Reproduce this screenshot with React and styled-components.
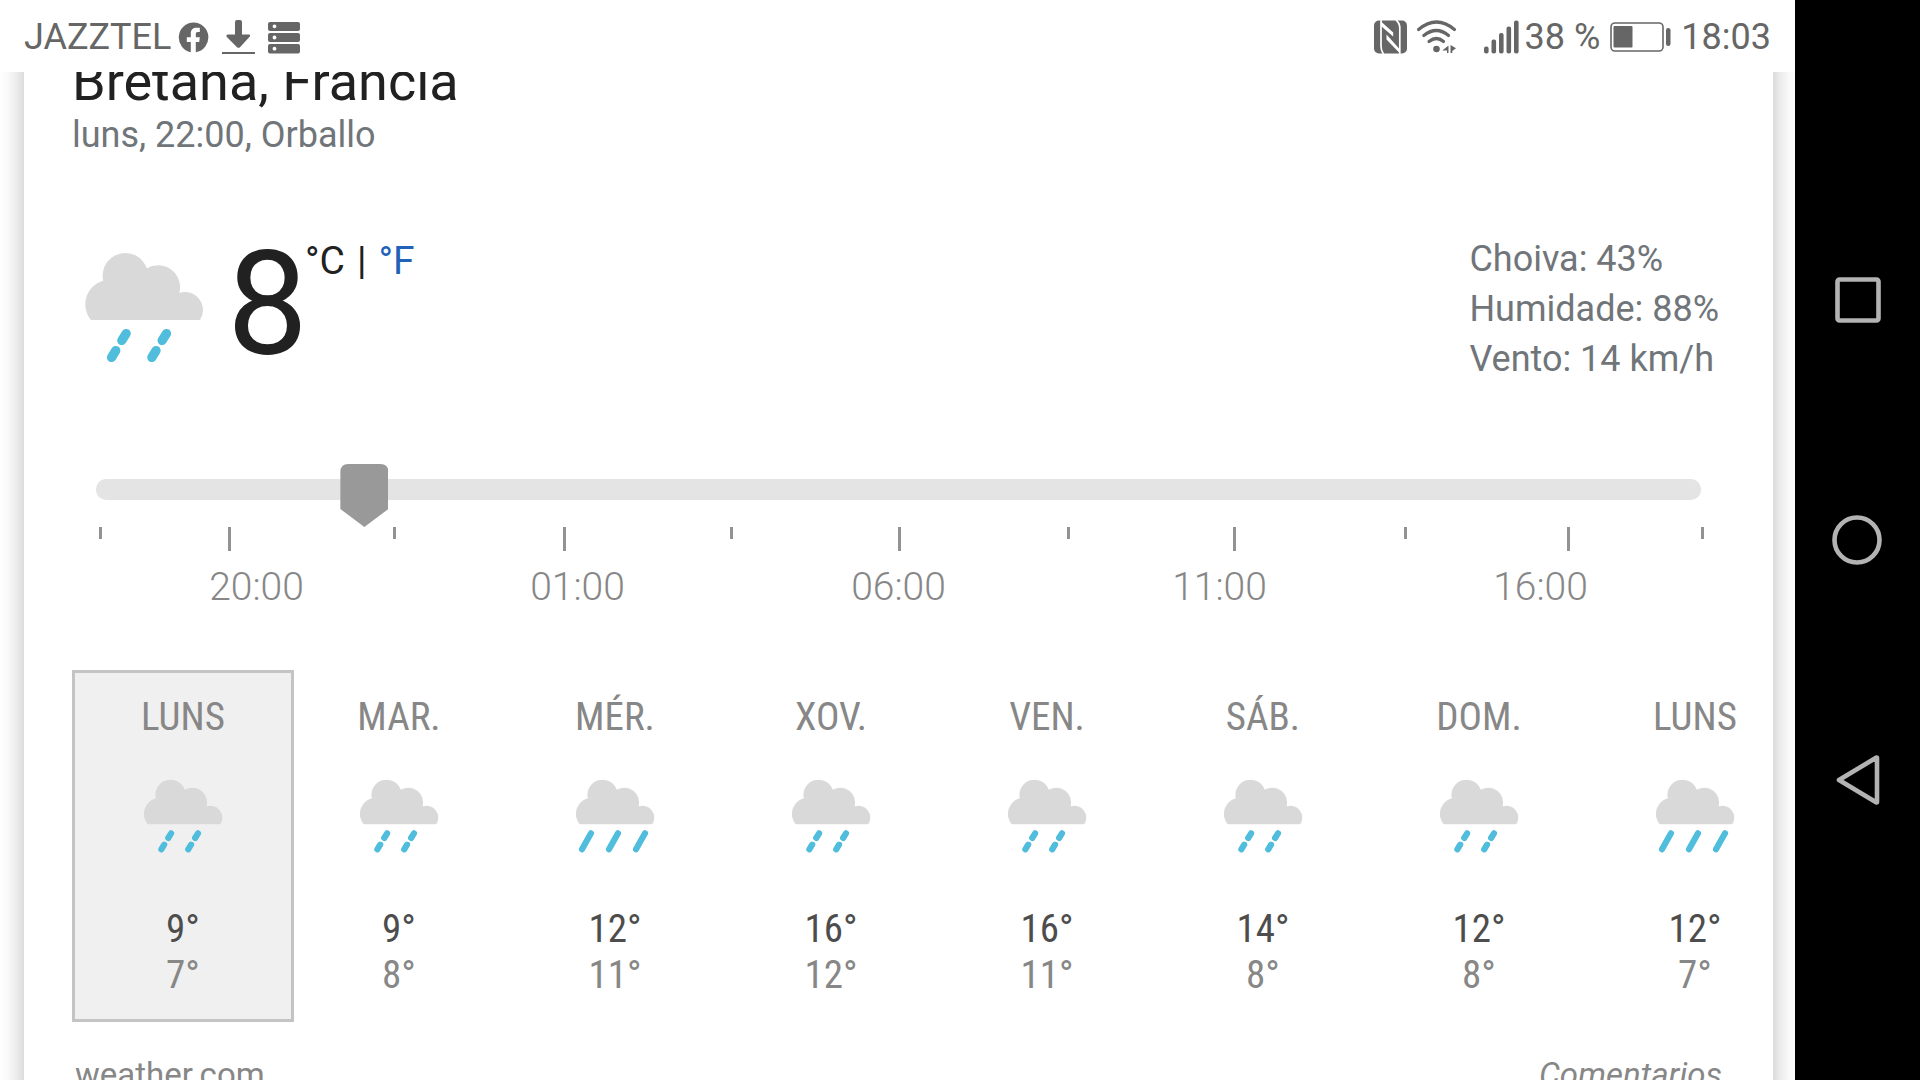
import React, { useState } from "react";
import styled, { createGlobalStyle, css } from "styled-components";

const GlobalStyle = createGlobalStyle`
  * { box-sizing: border-box; }
  body {
    margin: 0;
    background: #fff;
    font-family: Roboto, "Liberation Sans", sans-serif;
  }
  button {
    appearance: none;
    border: 0;
    margin: 0;
    padding: 0;
    background: none;
    color: inherit;
    font: inherit;
    cursor: pointer;
  }
`;

const Device = styled.div`
  display: flex;
  height: 100vh;
  overflow: hidden;
`;

const Screen = styled.div`
  flex: 1;
  min-width: 0;
  display: flex;
  flex-direction: column;
  background: #fff;
`;

const StatusBar = styled.header`
  flex: none;
  display: flex;
  justify-content: space-between;
  align-items: center;
  height: 72px;
  padding: 2px 24px 0;
  background: #fff;
  color: #666;
  font-size: 36px;
  line-height: 42px;
`;

const StatusGroup = styled.div`
  display: flex;
  align-items: center;
  gap: ${(p) => p.$gap}px;
`;

const Glyph = styled.svg`
  display: block;
  flex: none;
  fill: currentColor;
`;

const Viewport = styled.main`
  flex: 1;
  min-height: 0;
  overflow: hidden;
  padding: 0 22px 0 24px;
`;

const Card = styled.article`
  margin-top: -45px;
  padding: 24px 0;
  background: #fff;
  box-shadow: 0 0 24px rgba(0, 0, 0, 0.28);
  overflow: hidden;
`;

const Place = styled.h1`
  margin: 0;
  padding: 0 48px;
  color: #212121;
  font-size: 54px;
  font-weight: 400;
  line-height: 62px;
`;

const Moment = styled.p`
  margin: 0;
  padding: 0 48px;
  color: #70757a;
  font-size: 36px;
  line-height: 44px;
`;

const Current = styled.section`
  display: flex;
  align-items: flex-start;
  margin-top: 77px;
  padding: 0 54px 0 48px;
`;

const WeatherSvg = styled.svg`
  display: block;
  flex: none;
  width: ${(p) => p.$size}px;
  height: ${(p) => p.$size}px;
`;

const Degrees = styled.span`
  width: 78px;
  margin-left: 11px;
  color: #212121;
  font-size: 144px;
  line-height: 142px;
`;

const Units = styled.div`
  display: flex;
  gap: 12px;
  color: #212121;
  font-size: 39px;
  line-height: 54px;
`;

const Unit = styled.button`
  color: ${(p) => (p.$active ? "#212121" : "#1f62b8")};
`;

const Details = styled.div`
  margin-left: auto;
  color: #70757a;
  font-size: 36px;
  line-height: 50px;
`;

const Hours = styled.section`
  margin-top: 80px;
  padding: 0 72px;
`;

const thumb = css`
  width: 48px;
  height: 63px;
  border: 0;
  border-radius: 0;
  background: #999;
  clip-path: path("M8 0H40Q48 0 48 8V45L24 63L0 45V8Q0 0 8 0Z");
`;

const HourSlider = styled.input`
  appearance: none;
  display: block;
  width: 100%;
  height: 51px;
  margin: 0 0 12px;
  background: none;

  &::-webkit-slider-runnable-track {
    height: 21px;
    border-radius: 10px;
    background: #e4e4e4;
  }
  &::-webkit-slider-thumb {
    appearance: none;
    margin-top: -15px;
    ${thumb}
  }
  &::-moz-range-track {
    height: 21px;
    border-radius: 10px;
    background: #e4e4e4;
  }
  &::-moz-range-thumb {
    ${thumb}
  }
`;

const Ticks = styled.div`
  display: grid;
  grid-template-columns: ${(p) => p.$spans.map((s) => `${s}fr`).join(" ")} 0;
  height: 24px;
  padding-left: 3px;
`;

const Tick = styled.span`
  width: 3px;
  height: ${(p) => (p.$major ? 24 : 12)}px;
  background: #929292;
`;

const HourLabels = styled.div`
  display: grid;
  grid-template-columns: repeat(5, 1fr);
  margin-top: 13px;
  color: #878787;
  font-size: 39px;
  font-weight: 300;
  line-height: 46px;
  text-align: center;
`;

const Days = styled.section`
  display: flex;
  margin-top: 60px;
  padding-left: 48px;
  overflow: hidden;
`;

const Day = styled.button`
  flex: none;
  display: flex;
  flex-direction: column;
  align-items: center;
  width: 222px;
  margin-right: -6px;
  padding: 21px 0;
  border: 3px solid ${(p) => (p.$selected ? "#c4c4c4" : "transparent")};
  background: ${(p) => (p.$selected ? "#f0f0f0" : "transparent")};
  color: #878787;
  font-family: "Roboto Condensed", Roboto, "Liberation Sans", sans-serif;
  font-size: 39px;
  line-height: 46px;
`;

const DayIcon = styled.span`
  margin: 27px 0 43px;
`;

const High = styled.span`
  color: #4d4d4d;
`;

const Footer = styled.footer`
  display: flex;
  justify-content: space-between;
  margin-top: 34px;
  padding: 0 51px;
  font-size: 33px;
  line-height: 38px;
`;

const FooterLink = styled.a`
  color: #878787;
  text-decoration: none;
  font-style: ${(p) => (p.$italic ? "italic" : "normal")};
`;

const NavBar = styled.nav`
  flex: none;
  display: flex;
  flex-direction: column;
  justify-content: center;
  align-items: center;
  gap: 180px;
  width: 125px;
  background: #000;
`;

const NavButton = styled.button`
  width: 60px;
  height: 60px;

  svg {
    display: block;
    fill: none;
    stroke: #b3b3b3;
    stroke-width: 4.6;
    stroke-linejoin: round;
  }
`;

const CLOUD =
  "M19 86A24.5 24.5 0 0 1 31.2 46.7A22.7 22.7 0 0 1 74.8 34.3A22 22 0 0 1 107.3 59A18 18 0 0 1 128 86Z";
const DRIZZLE =
  "M54.2 99.5L49.8 106.5M43.8 116.5L39.5 123.5M94.5 99.5L90.1 106.5M84.1 116.5L79.8 123.5";
const RAIN = "M36 99.5L22.5 123.5M76.500 99.5L63 123.5M117 99.5L103.5 123.5";

function WeatherIcon({ kind, size }) {
  return (
    <WeatherSvg $size={size} viewBox="0 0 144 144" aria-hidden="true">
      <path d={CLOUD} fill="#d9d9d9" />
      <path
        d={kind === "rain" ? RAIN : DRIZZLE}
        fill="none"
        stroke="#4fbddb"
        strokeWidth="9.2"
        strokeLinecap="round"
      />
    </WeatherSvg>
  );
}

const FacebookIcon = () => (
  <Glyph width="31" height="31" viewBox="0 0 31 31">
    <path d="M15.5 0.5A15 15 0 0 0 12.8 30.2V20H8.8V15.3H12.8V11.6C12.8 7.6 15 5.7 18.5 5.7H21.8V10H20C18.3 10 17.8 10.8 17.8 12V15.3H21.8L21.2 20H17.8V30.3A15 15 0 0 0 15.5 0.5Z" />
  </Glyph>
);

const DownloadIcon = () => (
  <Glyph width="33" height="34" viewBox="0 0 33 34">
    <path d="M15 0h3q2 0 2 2v12.500h7q2 .5 .6 2.300L18 27.300q-1.500 1-3 0L4.600 16.800q-1-1.800 1-2.300H13V2q0-2 2-2zM0 32h33v2H0z" />
  </Glyph>
);

const StorageIcon = () => (
  <Glyph width="32" height="33" viewBox="0 0 32 33">
    <path
      fillRule="evenodd"
      d="M2 1h28q2 0 2 2v5q0 2-2 2H2Q0 10 0 8V3Q0 1 2 1zM6.500 3.500a1.900 1.900 0 1 0 .01 0zM2 12h28q2 0 2 2v5q0 2-2 2H2Q0 21 0 19V14Q0 12 2 12zM6.500 14.600a1.900 1.900 0 1 0 .01 0zM2 23h28q2 0 2 2v5.500q0 2-2 2H2Q0 32.500 0 30.500V25Q0 23 2 23zM6.500 25.800a1.900 1.900 0 1 0 .01 0z"
    />
  </Glyph>
);

const NfcIcon = () => (
  <Glyph width="33" height="34" viewBox="0 0 33 34">
    <rect x="0" y="0.5" width="33" height="33" rx="5" />
    <path
      d="M7 0V26Q7 31 9.500 34M22 0Q25.800 3 25.800 8V34"
      fill="none"
      stroke="#fff"
      strokeWidth="1.700"
    />
    <path d="M7 1.500L19.200 12.500V16.500L7 6zM12.500 14.500L25.500 29V33L12.500 19.500z" fill="#fff" />
  </Glyph>
);

const WifiIcon = () => (
  <Glyph width="39" height="34" viewBox="0 0 39 34">
    <g fill="none" stroke="currentColor" strokeWidth="3.200" strokeLinecap="round">
      <path d="M1.600 9.500Q19.500 -5.500 37.400 9.500" />
      <path d="M6.800 15.500Q19.500 5.500 31.500 15.500" />
      <path d="M12 21.500Q19.500 15.500 26.500 21.500" />
    </g>
    <circle cx="19.500" cy="29" r="3.300" />
    <path d="M31.500 25.500V33H30V30.500H25.300zM33.500 25L39 28.300L35.300 31V33H33.500z" />
  </Glyph>
);

const SignalIcon = () => (
  <Glyph width="35" height="34" viewBox="0 0 35 34">
    <rect x="0" y="26.500" width="4.600" height="7" rx="2" />
    <rect x="7.500" y="19.500" width="4.600" height="14" rx="2" />
    <rect x="15" y="13" width="4.600" height="20.500" rx="2" />
    <rect x="22.500" y="6.500" width="4.600" height="27" rx="2" />
    <rect x="30" y="0.500" width="4.600" height="33" rx="2" />
  </Glyph>
);

const BatteryIcon = () => (
  <Glyph width="61" height="30" viewBox="0 0 61 30">
    <rect x="1" y="1" width="52" height="28" rx="4" fill="none" stroke="currentColor" strokeWidth="1.600" />
    <rect x="3.500" y="4" width="19" height="21.500" rx="1" />
    <rect x="56" y="6" width="4.500" height="18" rx="2.200" />
  </Glyph>
);

const TICKS = [
  { span: 129 },
  { span: 165, major: true },
  { span: 170 },
  { span: 167, major: true },
  { span: 168 },
  { span: 169, major: true },
  { span: 166 },
  { span: 171, major: true },
  { span: 163 },
  { span: 134, major: true },
  { span: 0 },
];
const TICK_SPANS = TICKS.slice(0, -1).map((t) => t.span);

const HOURS = ["20:00", "01:00", "06:00", "11:00", "16:00"];

const DAYS = [
  { name: "LUNS", kind: "drizzle", high: 9, low: 7 },
  { name: "MAR.", kind: "drizzle", high: 9, low: 8 },
  { name: "MÉR.", kind: "rain", high: 12, low: 11 },
  { name: "XOV.", kind: "drizzle", high: 16, low: 12 },
  { name: "VEN.", kind: "drizzle", high: 16, low: 11 },
  { name: "SÁB.", kind: "drizzle", high: 14, low: 8 },
  { name: "DOM.", kind: "drizzle", high: 12, low: 8 },
  { name: "LUNS", kind: "rain", high: 12, low: 7 },
];

export default function App() {
  const [minute, setMinute] = useState(226);
  const [day, setDay] = useState(0);

  return (
    <>
      <GlobalStyle />
      <Device>
        <Screen>
          <StatusBar>
            <StatusGroup $gap={13}>
              <StatusGroup $gap={7}>
                <span>JAZZTEL</span>
                <FacebookIcon />
              </StatusGroup>
              <DownloadIcon />
              <StorageIcon />
            </StatusGroup>
            <StatusGroup $gap={10}>
              <NfcIcon />
              <StatusGroup $gap={28}>
                <WifiIcon />
                <StatusGroup $gap={6}>
                  <SignalIcon />
                  <span>38 %</span>
                </StatusGroup>
              </StatusGroup>
              <BatteryIcon />
              <time>18:03</time>
            </StatusGroup>
          </StatusBar>
          <Viewport>
            <Card>
              <Place>Bretaña, Francia</Place>
              <Moment>luns, 22:00, Orballo</Moment>
              <Current>
                <WeatherIcon kind="drizzle" size={144} />
                <Degrees>8</Degrees>
                <Units>
                  <Unit $active>°C</Unit>
                  <span>|</span>
                  <Unit>°F</Unit>
                </Units>
                <Details>
                  <div>Choiva: 43%</div>
                  <div>Humidade: 88%</div>
                  <div>Vento: 14 km/h</div>
                </Details>
              </Current>
              <Hours>
                <HourSlider
                  type="range"
                  aria-label="Hora"
                  min={0}
                  max={1440}
                  value={minute}
                  onChange={(e) => setMinute(Number(e.target.value))}
                />
                <Ticks $spans={TICK_SPANS}>
                  {TICKS.map((t, i) => (
                    <Tick key={i} $major={t.major} />
                  ))}
                </Ticks>
                <HourLabels>
                  {HOURS.map((h) => (
                    <span key={h}>{h}</span>
                  ))}
                </HourLabels>
              </Hours>
              <Days>
                {DAYS.map((d, i) => (
                  <Day key={i} $selected={i === day} onClick={() => setDay(i)}>
                    <span>{d.name}</span>
                    <DayIcon>
                      <WeatherIcon kind={d.kind} size={96} />
                    </DayIcon>
                    <High>{d.high}°</High>
                    <span>{d.low}°</span>
                  </Day>
                ))}
              </Days>
              <Footer>
                <FooterLink href="#weather">weather.com</FooterLink>
                <FooterLink href="#comentarios" $italic>
                  Comentarios
                </FooterLink>
              </Footer>
            </Card>
          </Viewport>
        </Screen>
        <NavBar>
          <NavButton aria-label="Recentes">
            <svg width="60" height="60" viewBox="0 0 60 60">
              <rect x="9.500" y="9.500" width="41" height="41" rx="2" />
            </svg>
          </NavButton>
          <NavButton aria-label="Inicio">
            <svg width="60" height="60" viewBox="0 0 60 60">
              <circle cx="29" cy="30" r="22.500" />
            </svg>
          </NavButton>
          <NavButton aria-label="Atrás">
            <svg width="60" height="60" viewBox="0 0 60 60">
              <path d="M11 30L48.500 7.500Q49 7.500 49 8V52Q49 52.500 48.500 52.500Z" />
            </svg>
          </NavButton>
        </NavBar>
      </Device>
    </>
  );
}
